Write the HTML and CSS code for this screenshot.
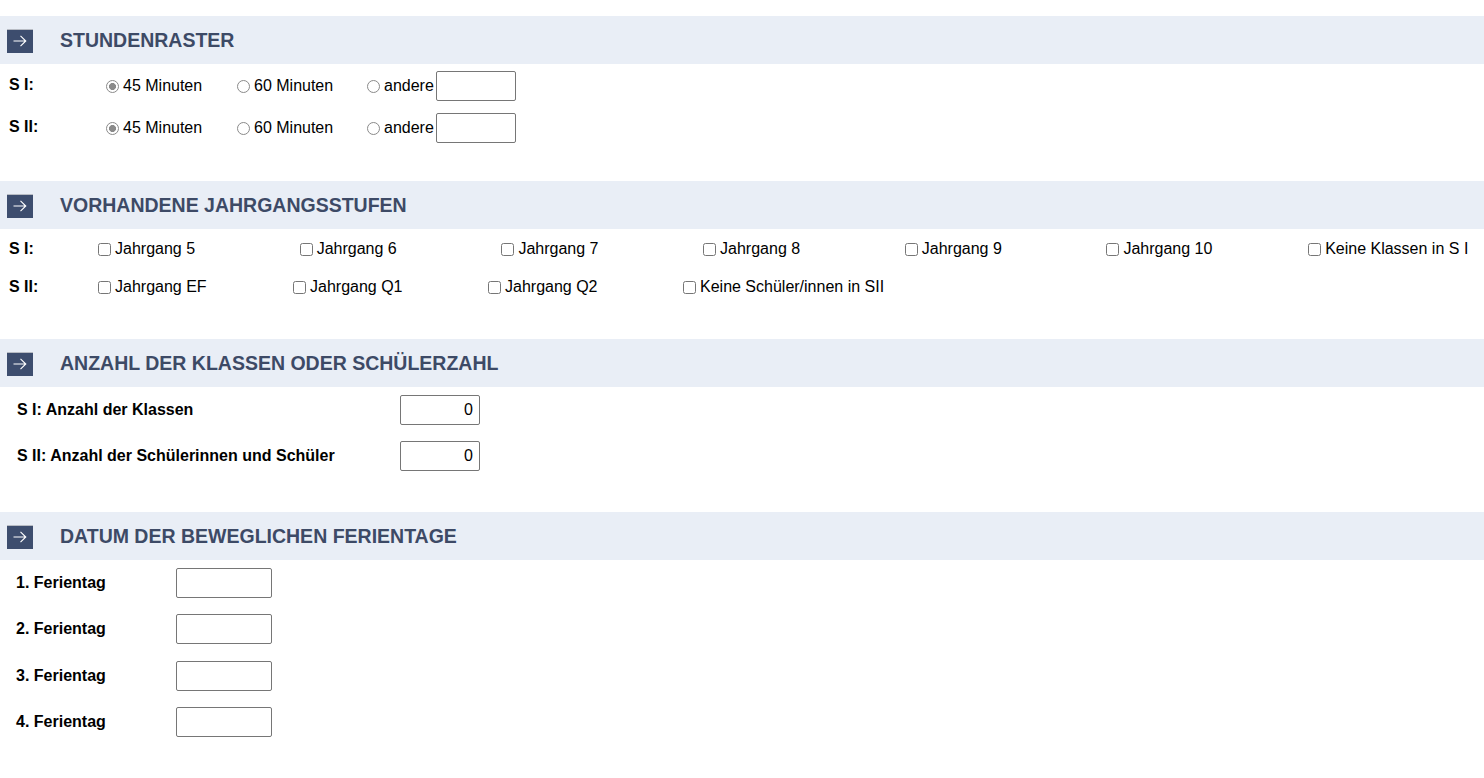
FILE: index.html
```html
<!DOCTYPE html>
<html lang="de">
<head>
<meta charset="utf-8">
<title>Schuldaten</title>
<link rel="stylesheet" href="styles.css">
</head>
<body>
<section class="sec sec-raster">
  <h2 class="head"><span class="ico"><svg width="14" height="12" viewBox="0 0 14 12"><path d="M0.5 6H13M7.5 0.8L12.8 6L7.5 11.2" fill="none" stroke="#fff" stroke-width="1.1"/></svg></span><span class="title">STUNDENRASTER</span></h2>
  <div class="rows rows-raster">
    <div class="row">
      <span class="lab lab-a">S I:</span>
      <label class="opt opt1"><input type="radio" class="rad" name="r1" checked>45 Minuten</label>
      <label class="opt opt2"><input type="radio" class="rad" name="r1">60 Minuten</label>
      <label class="opt opt3"><input type="radio" class="rad" name="r1">andere</label>
      <input type="text" class="box box-other">
    </div>
    <div class="row">
      <span class="lab lab-a">S II:</span>
      <label class="opt opt1"><input type="radio" class="rad" name="r2" checked>45 Minuten</label>
      <label class="opt opt2"><input type="radio" class="rad" name="r2">60 Minuten</label>
      <label class="opt opt3"><input type="radio" class="rad" name="r2">andere</label>
      <input type="text" class="box box-other">
    </div>
  </div>
</section>

<section class="sec sec-stufen">
  <h2 class="head"><span class="ico"><svg width="14" height="12" viewBox="0 0 14 12"><path d="M0.5 6H13M7.5 0.8L12.8 6L7.5 11.2" fill="none" stroke="#fff" stroke-width="1.1"/></svg></span><span class="title">VORHANDENE JAHRGANGSSTUFEN</span></h2>
  <div class="rows rows-stufen">
    <div class="row">
      <span class="lab lab-b">S I:</span>
      <label class="chk w1"><input type="checkbox">Jahrgang 5</label>
      <label class="chk w1"><input type="checkbox">Jahrgang 6</label>
      <label class="chk w1"><input type="checkbox">Jahrgang 7</label>
      <label class="chk w1"><input type="checkbox">Jahrgang 8</label>
      <label class="chk w1"><input type="checkbox">Jahrgang 9</label>
      <label class="chk w1"><input type="checkbox">Jahrgang 10</label>
      <label class="chk"><input type="checkbox">Keine Klassen in S I</label>
    </div>
    <div class="row">
      <span class="lab lab-b">S II:</span>
      <label class="chk w2"><input type="checkbox">Jahrgang EF</label>
      <label class="chk w2"><input type="checkbox">Jahrgang Q1</label>
      <label class="chk w2"><input type="checkbox">Jahrgang Q2</label>
      <label class="chk"><input type="checkbox">Keine Schüler/innen in SII</label>
    </div>
  </div>
</section>

<section class="sec sec-anzahl">
  <h2 class="head"><span class="ico"><svg width="14" height="12" viewBox="0 0 14 12"><path d="M0.5 6H13M7.5 0.8L12.8 6L7.5 11.2" fill="none" stroke="#fff" stroke-width="1.1"/></svg></span><span class="title">ANZAHL DER KLASSEN ODER SCHÜLERZAHL</span></h2>
  <div class="rows rows-anzahl">
    <div class="row">
      <span class="lab lab-c">S I: Anzahl der Klassen</span>
      <input type="text" class="box box-num" value="0">
    </div>
    <div class="row">
      <span class="lab lab-c">S II: Anzahl der Schülerinnen und Schüler</span>
      <input type="text" class="box box-num" value="0">
    </div>
  </div>
</section>

<section class="sec sec-ferien">
  <h2 class="head"><span class="ico"><svg width="14" height="12" viewBox="0 0 14 12"><path d="M0.5 6H13M7.5 0.8L12.8 6L7.5 11.2" fill="none" stroke="#fff" stroke-width="1.1"/></svg></span><span class="title">DATUM DER BEWEGLICHEN FERIENTAGE</span></h2>
  <div class="rows rows-ferien">
    <div class="row"><span class="lab lab-d">1. Ferientag</span><input type="text" class="box box-date"></div>
    <div class="row"><span class="lab lab-d">2. Ferientag</span><input type="text" class="box box-date"></div>
    <div class="row"><span class="lab lab-d">3. Ferientag</span><input type="text" class="box box-date"></div>
    <div class="row"><span class="lab lab-d">4. Ferientag</span><input type="text" class="box box-date"></div>
  </div>
</section>
</body>
</html>
```

FILE: styles.css
```css
html, body {
  margin: 0;
  padding: 0;
  background: #fff;
}
body {
  font-family: "Liberation Sans", Arial, sans-serif;
  font-size: 16px;
  color: #000;
  padding-top: 16px;
}
.head {
  margin: 0;
  height: 48px;
  background: #e9eef6;
  display: flex;
  align-items: center;
  padding-left: 7px;
}
.ico {
  width: 26px;
  height: 24px;
  background: #3d4d6e;
  border-top: 1px solid #b8bcc4;
  box-sizing: border-box;
  display: flex;
  align-items: center;
  justify-content: center;
  margin-top: 1px;
}
.ico svg { display: block; }
.title {
  margin-left: 27px;
  font-size: 19.5px;
  font-weight: bold;
  color: #3d4a66;
}
.rows { display: flex; flex-direction: column; }
.row { display: flex; align-items: center; }
.lab { font-weight: bold; }
input[type="radio"], input[type="checkbox"] {
  width: 13px;
  height: 13px;
  margin: 0 4px 0 0;
  flex: none;
}
input[type="checkbox"] { accent-color: #555; }
.rad {
  appearance: none;
  -webkit-appearance: none;
  box-sizing: border-box;
  border: 1px solid #8a8a8a;
  border-radius: 50%;
  background: #fff;
}
.rad:checked {
  background: radial-gradient(circle, #8a8a8a 0, #8a8a8a 3.2px, #fff 3.8px);
}
.opt, .chk { display: flex; align-items: center; flex: none; }
.box {
  box-sizing: border-box;
  height: 30px;
  border: 1px solid #767676;
  border-radius: 2px;
  font: 16px "Liberation Sans", Arial, sans-serif;
  padding: 0 6px;
  margin: 0;
  background: #fff;
}

/* Stundenraster */
.rows-raster { padding: 7px 0 38px; gap: 12px; }
.rows-raster .row { height: 30px; }
.lab-a { width: 97px; padding-left: 9px; align-self: flex-start; padding-top: 5px; }
.opt1 { width: 131px; }
.opt2 { width: 130px; }
.opt3 { width: 69px; }
.box-other { width: 80px; }

/* Jahrgangsstufen */
.rows-stufen { padding: 1px 0 33px; gap: 0; }
.rows-stufen .row { height: 38px; }
.lab-b { width: 89px; padding-left: 9px; }
.w1 { width: 201.7px; }
.w2 { width: 195px; }

/* Anzahl */
.rows-anzahl { padding: 8px 0 41px; gap: 16px; }
.rows-anzahl .row { height: 30px; }
.lab-c { width: 383px; padding-left: 17px; }
.box-num { width: 80px; text-align: right; }

/* Ferien */
.rows-ferien { padding: 8px 0 20px; gap: 16.33px; }
.rows-ferien .row { height: 30px; }
.lab-d { width: 160px; padding-left: 16px; }
.box-date { width: 96px; }
```
